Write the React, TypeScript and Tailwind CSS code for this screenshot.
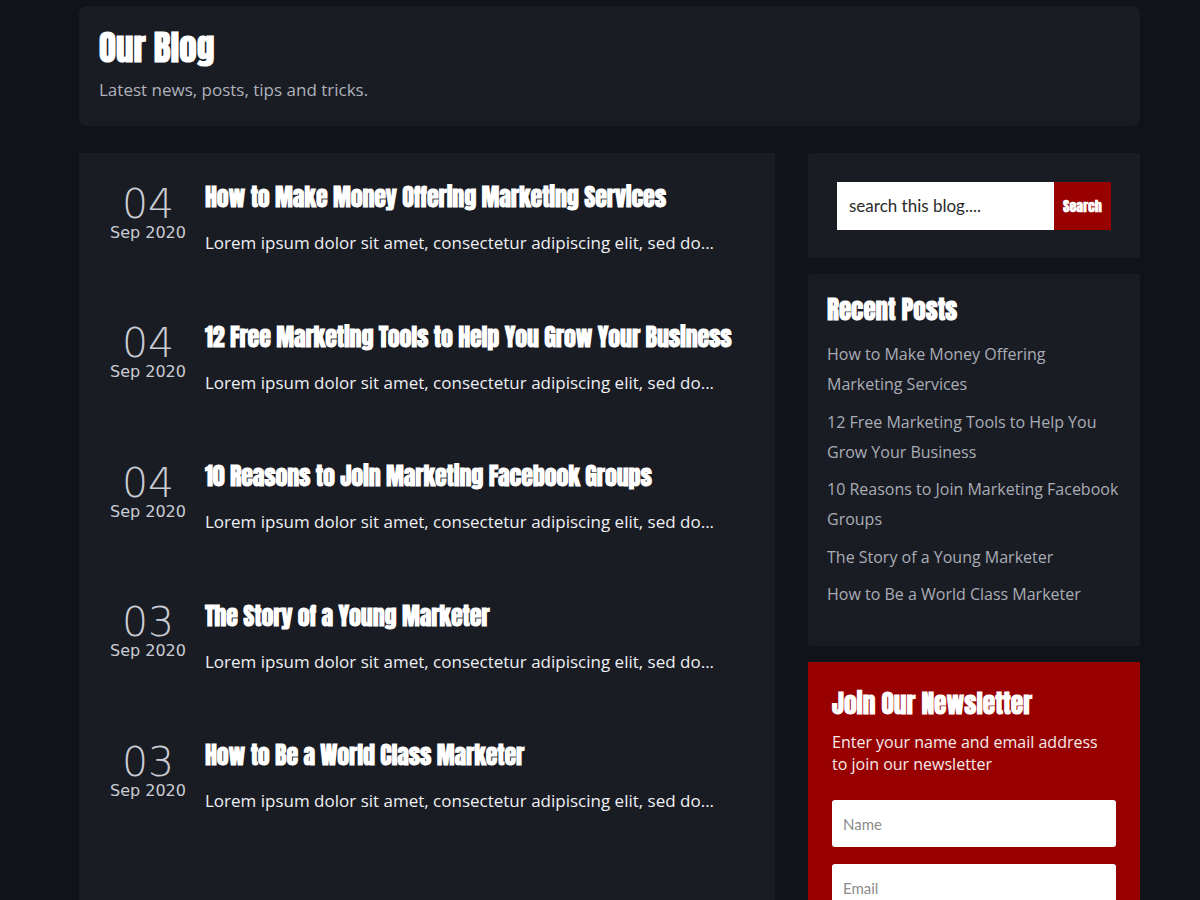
const display = "font-['Anton','Liberation_Sans_Narrow',sans-serif] font-bold";
const body = "font-['Open_Sans','Noto_Sans',sans-serif]";
const dateFont = "font-['DejaVu_Sans','Verdana',sans-serif]";

const posts = [
  { day: "04", month: "Sep 2020", title: "How to Make Money Offering Marketing Services" },
  { day: "04", month: "Sep 2020", title: "12 Free Marketing Tools to Help You Grow Your Business" },
  { day: "04", month: "Sep 2020", title: "10 Reasons to Join Marketing Facebook Groups" },
  { day: "03", month: "Sep 2020", title: "The Story of a Young Marketer" },
  { day: "03", month: "Sep 2020", title: "How to Be a World Class Marketer" },
];

function PostRow({ day, month, title }: { day: string; month: string; title: string }) {
  return (
    <article className="flex gap-[18px] h-[139.5px]">
      <div className="w-[78px] shrink-0 flex flex-col items-center text-[#c9ccd3]">
        <span className={`${dateFont} text-[41px] leading-[36px] mt-[2.5px] font-extralight`}>{day}</span>
        <span className={`${dateFont} text-[16px] leading-4 mt-[3px]`}>{month}</span>
      </div>
      <div>
        <h2 className={`${display} text-white text-[24px] leading-[29px] tracking-[-0.15px]`}>{title}</h2>
        <p className={`${body} text-[17px] leading-6 text-[#eef0f3] mt-[19px]`}>
          Lorem ipsum dolor sit amet, consectetur adipiscing elit, sed do...
        </p>
      </div>
    </article>
  );
}

export default function App() {
  return (
    <div className="min-h-[900px] bg-[#10131a] pt-[6px]">
      <div className="w-[1061px] ml-[79px]">
        {/* header */}
        <header className="bg-[#1a1c24] rounded-lg px-5 pt-5 pb-6">
          <h1 className={`${display} text-white text-[35px] leading-[44px]`}>Our Blog</h1>
          <p className={`${body} text-[17px] leading-6 text-[#aeb2ba] mt-2`}>
            Latest news, posts, tips and tricks.
          </p>
        </header>

        <div className="flex gap-[33px] mt-[27px] items-start">
          {/* posts */}
          <main className="w-[696px] shrink-0 bg-[#1a1c24] pt-[30px] pl-[30px] pr-6 min-h-[760px]">
            {posts.map((p) => (
              <PostRow key={p.title} {...p} />
            ))}
          </main>

          {/* sidebar */}
          <aside className="flex-1 min-w-0 flex flex-col gap-4">
            <div className="bg-[#1a1c24] rounded-[3px] px-[29px] pt-[29px] pb-[28px]">
              <div className="flex h-12">
                <input
                  placeholder="search this blog...."
                  className="flex-1 min-w-0 bg-white px-3 text-[17px] font-['Lato','Open_Sans',sans-serif] text-[#222] placeholder:text-[#2b2b2b] outline-none"
                />
                <button className={`${display} w-[57px] shrink-0 bg-[#990000] text-white text-[14px]`}>
                  Search
                </button>
              </div>
            </div>

            <div className="bg-[#1a1c24] rounded-[3px] px-[19px] pt-[19px] pb-[37px]">
              <h3 className={`${display} text-white text-[25px] leading-[34px]`}>Recent Posts</h3>
              <ul className="mt-[12px] flex flex-col gap-[7.5px]">
                {posts.map((p) => (
                  <li key={p.title}>
                    <a className={`${body} text-[16px] leading-[30px] text-[#a9adb5]`}>{p.title}</a>
                  </li>
                ))}
              </ul>
            </div>

            <div className="bg-[#980000] px-6 pt-[23px] pb-10">
              <h3 className={`${display} text-white text-[25.5px] leading-[36px]`}>Join Our Newsletter</h3>
              <p className={`${body} text-[16px] leading-[22px] text-[#f6eaea] mt-[10px]`}>
                Enter your name and email address to join our newsletter
              </p>
              <div className="mt-[25px] flex flex-col gap-[17px]">
                <input
                  placeholder="Name"
                  className="h-[47px] rounded-[3px] bg-white px-[11px] text-[15px] font-['Lato',sans-serif] placeholder:text-[#8c8c8c] outline-none"
                />
                <input
                  placeholder="Email"
                  className="h-[47px] rounded-[3px] bg-white px-[11px] text-[15px] font-['Lato',sans-serif] placeholder:text-[#8c8c8c] outline-none"
                />
              </div>
            </div>
          </aside>
        </div>
      </div>
    </div>
  );
}
